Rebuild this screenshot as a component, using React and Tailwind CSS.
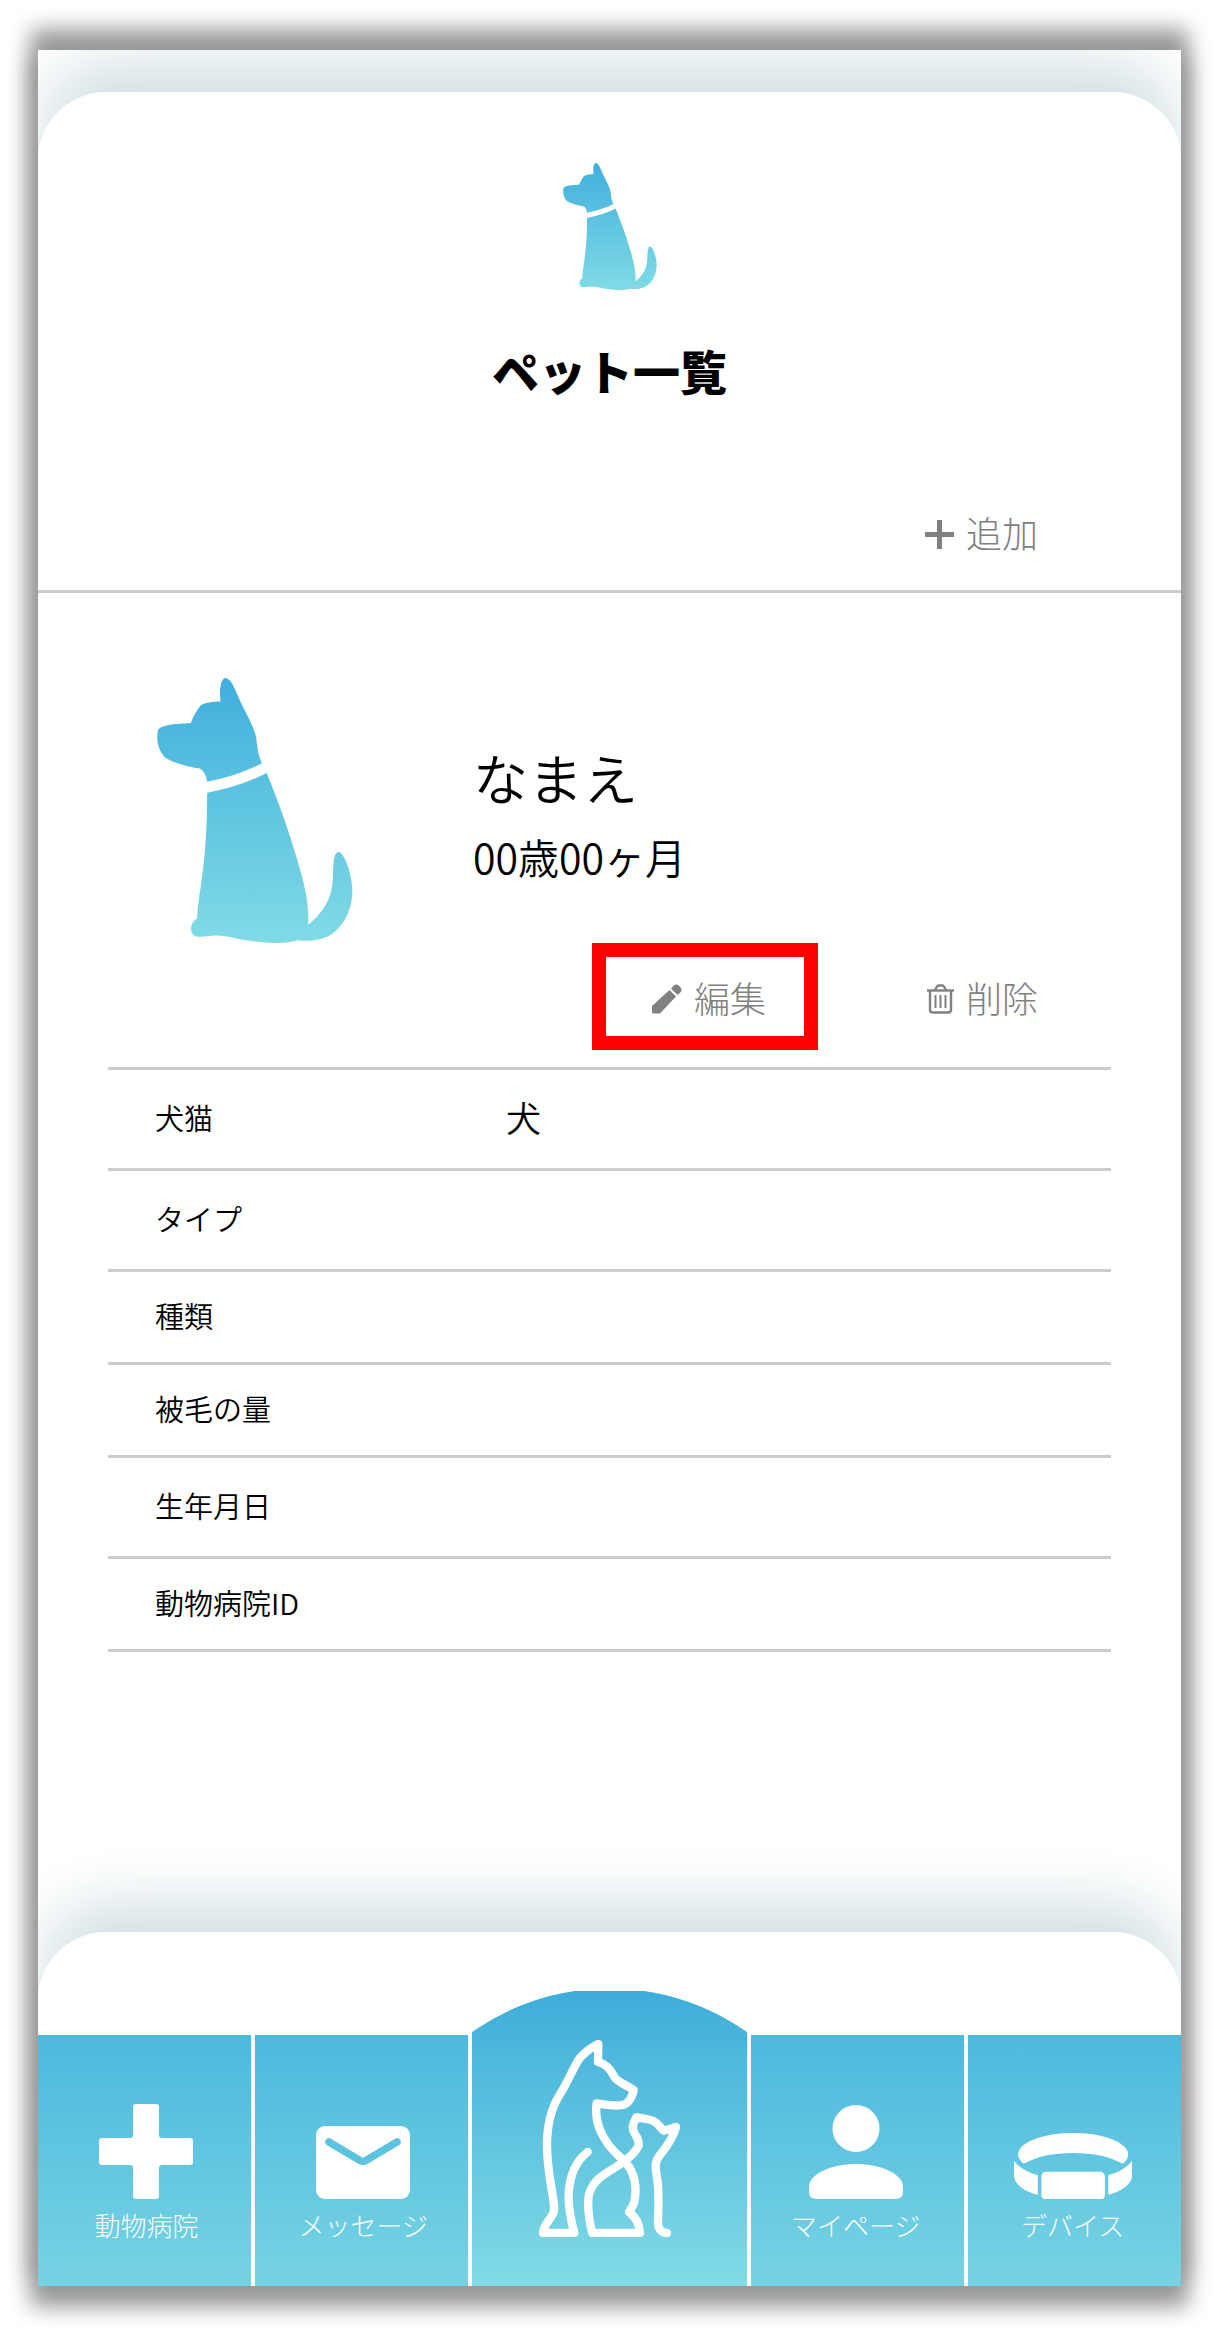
const petRows = [
  { label: "犬猫", value: "犬", height: "h-[101px]" },
  { label: "タイプ", value: "", height: "h-[101px]" },
  { label: "種類", value: "", height: "h-[93px]" },
  { label: "被毛の量", value: "", height: "h-[93px]" },
  { label: "生年月日", value: "", height: "h-[101px]" },
  { label: "動物病院ID", value: "", height: "h-[93px]" },
];

function DogIcon({ id, className }) {
  return (
    <svg viewBox="53 54 586 793" className={className} aria-hidden="true">
      <defs>
        <linearGradient id={id} x1="0" y1="54" x2="0" y2="847" gradientUnits="userSpaceOnUse">
          <stop offset="0" stopColor="#40afdd" />
          <stop offset="1" stopColor="#80dbe5" />
        </linearGradient>
      </defs>
      <g fill={`url(#${id})`}>
        <path d="M243 124C238 86 245 54 258 54C275 56 285 85 305 130C325 170 345 205 350 235C353 270 358 290 367 309C315 335 260 353 203 364C200 345 192 328 178 324C150 320 100 308 75 290C55 265 50 235 56 210C65 193 110 190 154 189C160 170 170 155 183 136C195 128 220 124 243 124Z" />
        <path d="M203 397C265 385 325 367 381 338C400 385 440 485 470 590C495 670 509 735 505 792C550 755 577 715 579 650C580 620 580 574 596 574C612 574 637 640 637 690C637 760 600 810 560 828C530 840 495 842 473 838C440 850 380 848 320 838C290 834 260 823 225 824C200 826 190 829 170 827C150 820 148 788 173 773C175 700 203 620 203 397Z" />
      </g>
    </svg>
  );
}

function PlusIcon() {
  return (
    <svg viewBox="0 0 29 29" className="w-[29px]" fill="currentColor" aria-hidden="true">
      <path d="M12 0h5v12h12v5H17v12h-5V17H0v-5h12z" />
    </svg>
  );
}

function PencilIcon() {
  return (
    <svg viewBox="0 0 30 30" className="w-[30px]" fill="currentColor" aria-hidden="true">
      <path d="M0 22L17.500 6L24 12.500L8 29.500H1.500Q0 29.500 0 28Z" />
      <path d="M19 4.500L22 1.500Q24.500-.5 27 1.800L28.500 3.500Q30.500 6 28.500 8.200L25.500 11Z" />
    </svg>
  );
}

function TrashIcon() {
  return (
    <svg viewBox="0 0 27 30" className="w-[27px]" fill="none" stroke="currentColor" strokeWidth="2.400" aria-hidden="true">
      <path d="M0 6.500H27" />
      <path d="M8 6L10 2.500Q10.500 1.500 11.500 1.500H15.500Q16.500 1.500 17 2.500L19 6" />
      <path d="M3 7V26Q3 28.500 6 28.500H21Q24 28.500 24 26V7" />
      <path d="M8.500 11V24M13.500 11V24M18.500 11V24" strokeWidth="2" />
    </svg>
  );
}

function HospitalIcon() {
  return (
    <svg viewBox="0 0 94 95" className="w-[94px]" fill="currentColor" aria-hidden="true">
      <path d="M37 0H57Q60 0 60 3V31Q60 34 63 34H91Q94 34 94 37V58Q94 61 91 61H63Q60 61 60 64V92Q60 95 57 95H37Q34 95 34 92V64Q34 61 31 61H3Q0 61 0 58V37Q0 34 3 34H31Q34 34 34 31V3Q34 0 37 0Z" />
    </svg>
  );
}

function MailIcon() {
  return (
    <svg viewBox="0 0 94 73" className="w-[94px]" aria-hidden="true">
      <rect width="94" height="73" rx="9" fill="currentColor" />
      <path d="M13 16L44 34.500Q47 36 50 34.500L81 16" fill="none" stroke="#5bc3e0" strokeWidth="7.500" strokeLinecap="round" />
    </svg>
  );
}

function PersonIcon() {
  return (
    <svg viewBox="0 0 94 94" className="w-[94px]" fill="currentColor" aria-hidden="true">
      <circle cx="47" cy="23.500" r="23.500" />
      <path d="M0 82C0 69 22 59 47 59S94 69 94 82V87Q94 94 87 94H7Q0 94 0 87Z" />
    </svg>
  );
}

function CollarIcon() {
  return (
    <svg viewBox="824 697 353 200" className="w-[118px]" fill="currentColor" aria-hidden="true">
      <path d="M853 789C838 776 834 764 837 754C849 719 921 697 1001 697S1153 719 1165 754C1167 766 1164 778 1149 789C1110 767 1060 757 1001 757S893 767 853 789Z" />
      <path d="M824 780C838 800 865 815 895 823V882C860 873 824 852 824 824Z" />
      <path d="M1177 780C1163 800 1136 815 1106 823V882C1141 873 1177 852 1177 824Z" />
      <rect x="906" y="813" width="190" height="84" rx="14" />
    </svg>
  );
}

function DogCatIcon() {
  return (
    <svg
      viewBox="239 214 423 591"
      className="w-[141px]"
      fill="none"
      stroke="currentColor"
      strokeWidth="25"
      strokeLinecap="round"
      strokeLinejoin="round"
      aria-hidden="true"
    >
      <path d="M385 550C350 577 330 620 328 680C326 720 335 755 345 793L251 793C252 765 280 750 284 725C287 690 263 620 263 530C263 470 275 420 300 380C325 342 345 290 360 270C378 248 400 235 417 226L416 280C440 285 453 300 465 325C480 345 505 350 523 364C518 385 508 405 490 409C465 414 440 408 412 404C405 450 420 490 445 525C470 560 500 575 515 605C530 635 532 665 525 700C520 715 515 720 509 730C530 745 540 765 542 793L399 793C390 760 385 725 387 690C392 640 430 620 465 598C500 578 530 550 538 530C540 500 520 500 520 475C522 465 526 455 531 446C550 450 575 450 590 462C600 470 605 480 614 486C625 482 640 480 650 475C642 505 625 530 605 555C580 585 590 600 595 640C600 690 596 735 596 765C597 785 610 793 623 793" />
    </svg>
  );
}

function ActionButton({ icon, children }) {
  return (
    <button type="button" className="flex items-center gap-3 text-[36px] leading-[48px] font-light text-[#808080]">
      {icon}
      <span className="pb-1">{children}</span>
    </button>
  );
}

function NavTab({ icon, label, className }) {
  return (
    <a
      href="#"
      className={`flex h-[251px] flex-col items-center justify-end gap-2 bg-linear-to-b from-[#4cb9de] to-[#76d3e3] pb-[43px] text-white ${className}`}
    >
      {icon}
      <span className="text-[26px] leading-9 font-light">{label}</span>
    </a>
  );
}

export default function App() {
  return (
    <div className="bg-white px-[38px] py-[50px] font-['Noto_Sans_CJK_JP',sans-serif] text-black">
      <div className="overflow-hidden bg-white pt-[42px] shadow-[0_-14px_20px_7px_#999,0_14px_20px_7px_#999]">
        <main className="rounded-t-[68px] bg-white shadow-[0_-36px_60px_-6px_#d3e0e4]">
          <header className="flex flex-col items-center border-b-3 border-[#ccc] pt-[71px] pb-[30px]">
            <DogIcon id="dog-small" className="w-[94px]" />
            <h1 className="mt-[50px] text-[47px] leading-[60px] font-black">ペット一覧</h1>
            <div className="mt-[108px] flex w-full justify-end pr-[143px]">
              <ActionButton icon={<PlusIcon />}>追加</ActionButton>
            </div>
          </header>

          <section className="pt-[85px] pb-[280px]">
            <div className="flex gap-[120px] pl-[119px]">
              <DogIcon id="dog-large" className="w-[196px]" />
              <div className="pt-[58px]">
                <h2 className="text-[55px] leading-[80px] font-[350]">なまえ</h2>
                <p className="mt-[10px] text-[41px] leading-[60px] font-[350]">00歳00ヶ月</p>
              </div>
            </div>

            <div className="flex items-center justify-end gap-[109px] pr-[143px]">
              <div className="flex h-[107px] w-[226px] items-center justify-center border-[14px] border-[#f00] pt-1 pl-2">
                <ActionButton icon={<PencilIcon />}>編集</ActionButton>
              </div>
              <div className="pt-1">
                <ActionButton icon={<TrashIcon />}>削除</ActionButton>
              </div>
            </div>

            <div className="mx-[70px] mt-[17px]">
              <table className="w-full border-t-3 border-[#ccc]">
                <tbody>
                  {petRows.map((row) => (
                    <tr key={row.label} className={`border-b-3 border-[#ccc] ${row.height}`}>
                      <th scope="row" className="w-[398px] pb-1 pl-[47px] text-left text-[29px] font-[350]">
                        {row.label}
                      </th>
                      <td className="pb-1 text-[35px] leading-[48px] font-[350]">{row.value}</td>
                    </tr>
                  ))}
                </tbody>
              </table>
            </div>
          </section>
        </main>

        <footer className="rounded-t-[68px] bg-white pt-[59px] shadow-[0_-36px_60px_-6px_#d3e0e4]">
          <nav className="grid grid-cols-[213fr_213fr_276fr_213fr_213fr] items-end gap-1">
            <NavTab icon={<HospitalIcon />} label="動物病院" className="pl-1" />
            <NavTab icon={<MailIcon />} label="メッセージ" className="pl-1" />
            <a
              href="#"
              aria-label="ホーム"
              className="flex h-[295px] flex-col items-center bg-linear-to-b from-[#3dadda] to-[#80dbe5] pt-[49px] text-white [clip-path:circle(238px_at_50%_235px)]"
            >
              <DogCatIcon />
            </a>
            <NavTab icon={<PersonIcon />} label="マイページ" className="pr-1" />
            <NavTab icon={<CollarIcon />} label="デバイス" className="pr-1" />
          </nav>
        </footer>
      </div>
    </div>
  );
}
